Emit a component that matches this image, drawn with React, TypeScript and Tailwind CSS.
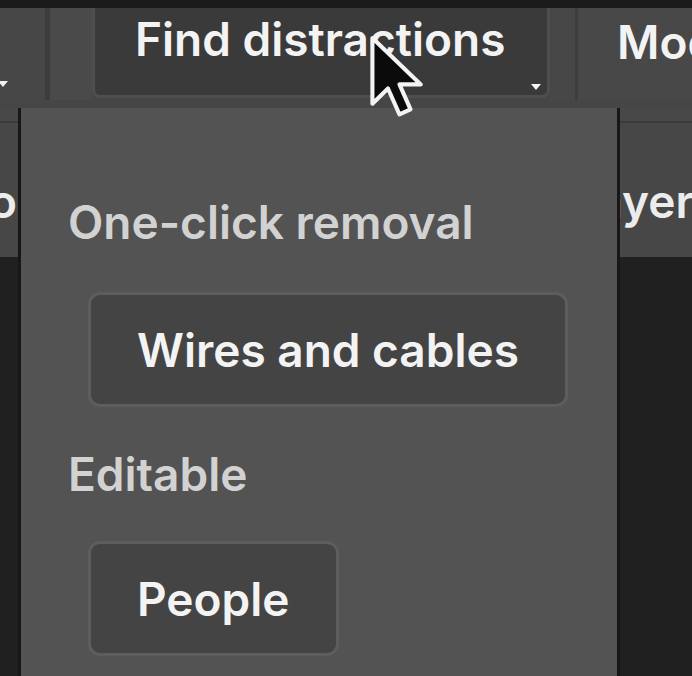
import React from 'react';

// Photoshop contextual task bar, zoomed in: "Find distractions" dropdown open

const Caret = ({ className }: { className?: string }) => (
  <svg className={className} width="12" height="8" viewBox="0 0 12 8">
    <path d="M1 1 L11 1 L6 7 Z" fill="#f2f2f2" />
  </svg>
);

const Pointer = () => (
  <svg
    className="absolute left-[368px] top-[34px]"
    width="58"
    height="84"
    viewBox="-1 -1 14 20.5"
  >
    <path
      d="M0 0 L0 16 L3.8 12.3 L6.6 18.6 L9.3 17.4 L6.6 11.3 L11.8 11.3 Z"
      fill="#0b0b0b"
      stroke="#f4f4f4"
      strokeWidth="1"
      strokeLinejoin="round"
    />
  </svg>
);

function MenuButton({ label }: { label: string }) {
  return (
    <div className="ml-[20px] rounded-[12px] border-[3px] border-[#5d5d5d] bg-[#444444] h-[115px] px-[46px] flex items-center">
      <span className="text-[46px] leading-none font-semibold text-[#f3f3f3]">{label}</span>
    </div>
  );
}

export default function App() {
  return (
    <div
      className="relative w-[692px] h-[676px] overflow-hidden bg-[#202020] select-none"
      style={{ fontFamily: 'Inter, "Noto Sans", sans-serif' }}
    >
      {/* top edge */}
      <div className="h-[8px] bg-[#1b1b1b]" />

      {/* ── Task bar ── */}
      <div className="h-[100px] bg-[#464646] flex items-start">
        <div className="w-[45px] h-[90px] bg-[#474747] relative">
          <Caret className="absolute left-[-3px] top-[72px]" />
        </div>
        <div className="w-[5px] h-[92px] bg-[#3c3c3c]" />
        <div className="w-[42px] h-[92px] bg-[#4a4a4a]" />
        <div className="relative w-[458px] h-[90px] bg-[#3a3a3a] border-x-[3px] border-b-[3px] border-[#4e4e4e] rounded-b-[8px] pl-[40px] pt-[8px]">
          <span className="text-[46px] leading-none font-semibold text-[#f3f3f3]">
            Find distractions
          </span>
          <Caret className="absolute right-[5px] top-[75px]" />
        </div>
        <div className="w-[25px] h-[92px] bg-[#474747]" />
        <div className="w-[3px] h-[92px] bg-[#3d3d3d]" />
        <div className="flex-1 h-[92px] bg-[#484848] pl-[39px] pt-[11px] overflow-hidden">
          <span className="text-[46px] leading-none font-semibold text-[#f3f3f3] whitespace-nowrap">Modify</span>
        </div>
      </div>

      {/* panel header strip */}
      <div className="h-[15px] bg-[#484848] border-b-[2px] border-[#3b3b3b]" />
      <div className="h-[134px] bg-[#474747] flex overflow-hidden pt-[55px]">
        <div className="w-[17px] shrink-0 flex justify-end overflow-hidden">
          <span className="text-[46px] leading-none font-semibold text-[#ececec] whitespace-nowrap">Histo</span>
        </div>
        <div className="flex-1" />
        <span className="shrink-0 mr-[-27px] text-[46px] leading-none font-semibold text-[#ececec] whitespace-nowrap">
          Layers
        </span>
      </div>

      {/* ── Dropdown menu ── */}
      <div className="absolute left-[18px] top-[108px] w-[602px] bottom-0 bg-[#535353] border-x-[3px] border-[#171717] flex flex-col items-start pl-[47px] pt-[91px]">
        <span className="text-[46px] leading-none font-semibold text-[#d2d2d2]">
          One-click removal
        </span>
        <div className="mt-[47px] flex">
          <MenuButton label="Wires and cables" />
        </div>
        <span className="mt-[44px] text-[46px] leading-none font-semibold text-[#d2d2d2]">
          Editable
        </span>
        <div className="mt-[44px] flex">
          <MenuButton label="People" />
        </div>
      </div>

      <Pointer />
    </div>
  );
}
